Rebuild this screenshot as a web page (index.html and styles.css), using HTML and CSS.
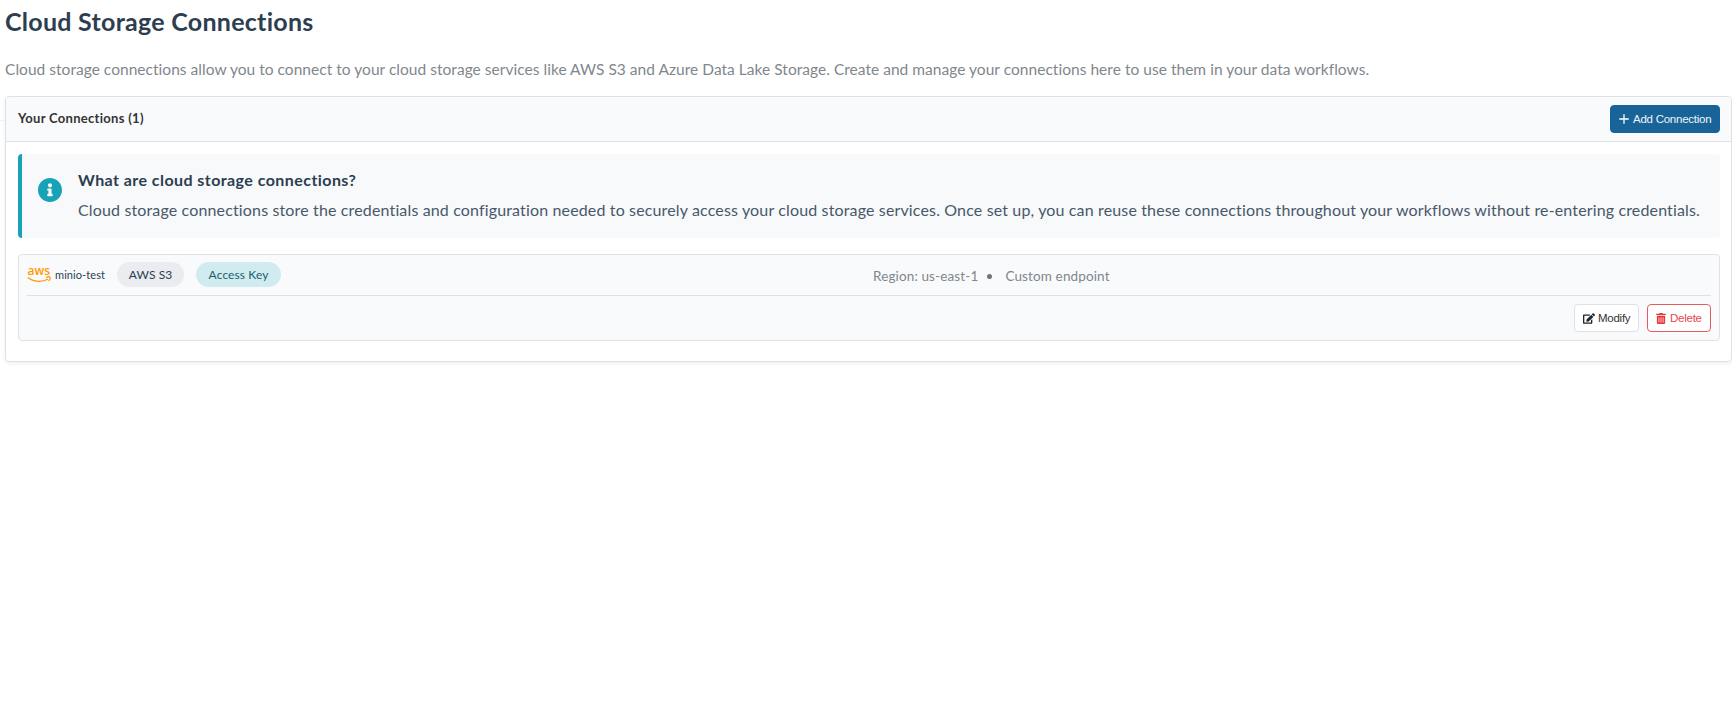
FILE: index.html
```
<!DOCTYPE html>
<html lang="en">
<head>
<meta charset="utf-8">
<title>Cloud Storage Connections</title>
<link rel="stylesheet" href="styles.css">
</head>
<body>
<main class="page">
  <h1 class="title">Cloud Storage Connections</h1>
  <p class="subtitle">Cloud storage connections allow you to connect to your cloud storage services like AWS S3 and Azure Data Lake Storage. Create and manage your connections here to use them in your data workflows.</p>
  <section class="card">
    <header class="card-header">
      <h2 class="card-title">Your Connections (1)</h2>
      <button class="btn btn-primary"><svg class="icon-plus" viewBox="0 0 10 10"><path d="M5 .7v8.6M.7 5h8.6"/></svg><span>Add Connection</span></button>
    </header>
    <div class="card-body">
      <div class="info">
        <svg class="icon-info" viewBox="8 8 496 496"><path d="M256 8C119 8 8 119 8 256s111 248 248 248 248-111 248-248S393 8 256 8zm0 110c23.200 0 42 18.800 42 42s-18.800 42-42 42-42-18.800-42-42 18.800-42 42-42zm56 254c0 6.600-5.400 12-12 12h-88c-6.600 0-12-5.400-12-12v-24c0-6.600 5.400-12 12-12h12v-64h-12c-6.600 0-12-5.400-12-12v-24c0-6.600 5.400-12 12-12h64c6.600 0 12 5.400 12 12v100h12c6.600 0 12 5.400 12 12v24z"/></svg>
        <div class="info-copy">
          <h3 class="info-title">What are cloud storage connections?</h3>
          <p class="info-text">Cloud storage connections store the credentials and configuration needed to securely access your cloud storage services. Once set up, you can reuse these connections throughout your workflows without re-entering credentials.</p>
        </div>
      </div>
      <article class="connection">
        <div class="connection-main">
          <div class="identity">
            <svg class="aws" viewBox="0 0 24 16"><text x="0.500" y="8.300" textLength="22.500" lengthAdjust="spacingAndGlyphs">aws</text><path class="smile" d="M.8 10.500C6.500 15.300 15.500 15.400 20.900 12"/><path class="tip" d="M19 10.400c1.400-.6 3.600-.8 4-.3.300.6-.2 2.700-1.300 4"/></svg>
            <span class="name">minio-test</span>
            <span class="badge badge-type">AWS S3</span>
            <span class="badge badge-auth">Access Key</span>
          </div>
          <div class="details"><span>Region: us-east-1</span><i class="dot"></i><span>Custom endpoint</span></div>
        </div>
        <div class="actions">
          <button class="btn btn-modify"><svg class="icon-edit" viewBox="0 0 576 512"><path d="M402.600 83.200l90.200 90.200c3.800 3.800 3.800 10 0 13.800L274.400 405.600l-92.800 10.300c-12.400 1.400-22.900-9.100-21.500-21.500l10.300-92.800L388.800 83.200c3.800-3.800 10-3.800 13.800 0zm162-22.900l-48.800-48.800c-15.200-15.200-39.900-15.200-55.200 0l-35.400 35.400c-3.800 3.800-3.800 10 0 13.800l90.200 90.200c3.800 3.800 10 3.800 13.800 0l35.400-35.400c15.200-15.300 15.200-40 0-55.200zM384 346.200V448H64V128h229.800c3.200 0 6.200-1.300 8.500-3.500l40-40c7.600-7.600 2.200-20.500-8.500-20.500H48C21.500 64 0 85.500 0 112v352c0 26.500 21.500 48 48 48h352c26.500 0 48-21.500 48-48V306.200c0-10.700-12.900-16-20.500-8.500l-40 40c-2.200 2.300-3.500 5.300-3.500 8.500z"/></svg><span>Modify</span></button>
          <button class="btn btn-delete"><svg class="icon-trash" viewBox="0 0 448 512"><path d="M32 464a48 48 0 0 0 48 48h288a48 48 0 0 0 48-48V128H32zm272-256a16 16 0 0 1 32 0v224a16 16 0 0 1-32 0zm-96 0a16 16 0 0 1 32 0v224a16 16 0 0 1-32 0zm-96 0a16 16 0 0 1 32 0v224a16 16 0 0 1-32 0zM432 32H312l-9.400-18.700A24 24 0 0 0 281.100 0H166.800a23.700 23.700 0 0 0-21.400 13.300L136 32H16A16 16 0 0 0 0 48v32a16 16 0 0 0 16 16h416a16 16 0 0 0 16-16V48a16 16 0 0 0-16-16z"/></svg><span>Delete</span></button>
        </div>
      </article>
    </div>
  </section>
</main>
</body>
</html>
```
FILE: styles.css
```
* { box-sizing: border-box; }
body {
  margin: 0;
  background: #fff;
  color: #2c3e50;
  font-family: Lato, "Open Sans", sans-serif;
  font-variant-ligatures: none;
  overflow: hidden;
}
h1, h2, h3, p { margin: 0; }
.page {
  height: 718px;
  padding-left: 5px;
  background: linear-gradient(#f1f2f3, #f1f2f3) 0 120px / 5px 1px no-repeat;
}
.title { padding-top: 6px; font-size: 25px; line-height: 30px; font-weight: 700; letter-spacing: .27px; }
.subtitle { margin-top: 23px; font-size: 15.5px; line-height: 20px; color: #7f878e; letter-spacing: .032px; }
.card {
  margin-top: 17px;
  height: 266px;
  border: 1px solid #dee2e6;
  border-radius: 4px;
  box-shadow: 0 2px 4px rgba(0, 0, 0, .06);
}
.card-header {
  display: flex;
  align-items: center;
  justify-content: space-between;
  height: 45px;
  padding: 0 11px 1px 12px;
  border-bottom: 1px solid #dee2e6;
  border-radius: 3px 3px 0 0;
  background: #f9fafc;
}
.card-title { padding-bottom: 1px; font-size: 13px; font-weight: 700; color: #333; letter-spacing: .3px; }
.btn {
  display: flex;
  align-items: center;
  height: 28px;
  padding: 0 8px;
  border: 1px solid #dee2e6;
  border-radius: 4px;
  background: #fff;
  color: #333;
  font: 11.5px/16px "Liberation Sans", Arial, sans-serif;
  letter-spacing: -.25px;
  white-space: nowrap;
}
.btn svg { flex: none; }
.btn-primary { width: 110px; border-color: #186498; background: #186498; color: #eef5fa; }
.btn-modify { width: 65px; }
.btn-delete { width: 64px; border-color: #e35d60; color: #e5484d; }
.icon-plus { width: 10px; height: 10px; margin-right: 4px; fill: none; stroke: #fff; stroke-width: 1.3; stroke-linecap: round; }
.icon-edit { width: 12px; height: 11px; margin-right: 3px; fill: #212529; }
.icon-trash { width: 10px; height: 11px; margin-right: 4px; fill: #e5383b; }
.card-body { padding: 12px 11px 0 12px; }
.info {
  display: flex;
  height: 84px;
  padding: 15px 16px;
  border-left: 4px solid #17a2b8;
  border-radius: 4px;
  background: #f8f9fb;
}
.icon-info { flex: none; width: 24px; height: 24px; margin: 9px 16px 0 0; fill: #17a2b8; }
.info-title { font-size: 16px; line-height: 22px; font-weight: 700; letter-spacing: .44px; }
.info-text { margin-top: 8px; font-size: 16px; line-height: 22px; color: #48586a; white-space: nowrap; letter-spacing: .144px; }
.connection {
  height: 87px;
  margin-top: 16px;
  padding: 0 8px;
  border: 1px solid #dee2e6;
  border-radius: 4px;
  background: #f9fafc;
}
.connection-main {
  display: grid;
  grid-template-columns: 1fr 1fr;
  align-items: center;
  height: 41px;
  border-bottom: 1px solid #dee2e6;
}
.identity { display: flex; align-items: center; padding-bottom: 1px; }
.aws { width: 24px; height: 16px; margin-right: 4px; overflow: visible; }
.aws text { font: 600 13px "Open Sans", sans-serif; fill: #f90; }
.aws path { fill: none; stroke: #f90; stroke-width: 1.3; }
.name { margin-right: 12px; font-size: 11px; letter-spacing: .08px; }
.badge { display: flex; align-items: center; justify-content: center; height: 25px; border-radius: 13px; font-size: 12px; letter-spacing: .1px; }
.badge-type { width: 67px; margin-right: 12px; background: #eaecef; }
.badge-auth { width: 85px; background: #d1ecf1; color: #1b5e68; }
.details { display: flex; align-items: center; padding: 2px 0 0 4px; font-size: 13.5px; line-height: 18px; color: #7f878e; letter-spacing: .13px; }
.dot { width: 5px; height: 5px; margin: 0 13px 0 9px; border-radius: 50%; background: #6c757d; }
.actions { display: flex; justify-content: flex-end; gap: 8px; padding-top: 8px; }
```
